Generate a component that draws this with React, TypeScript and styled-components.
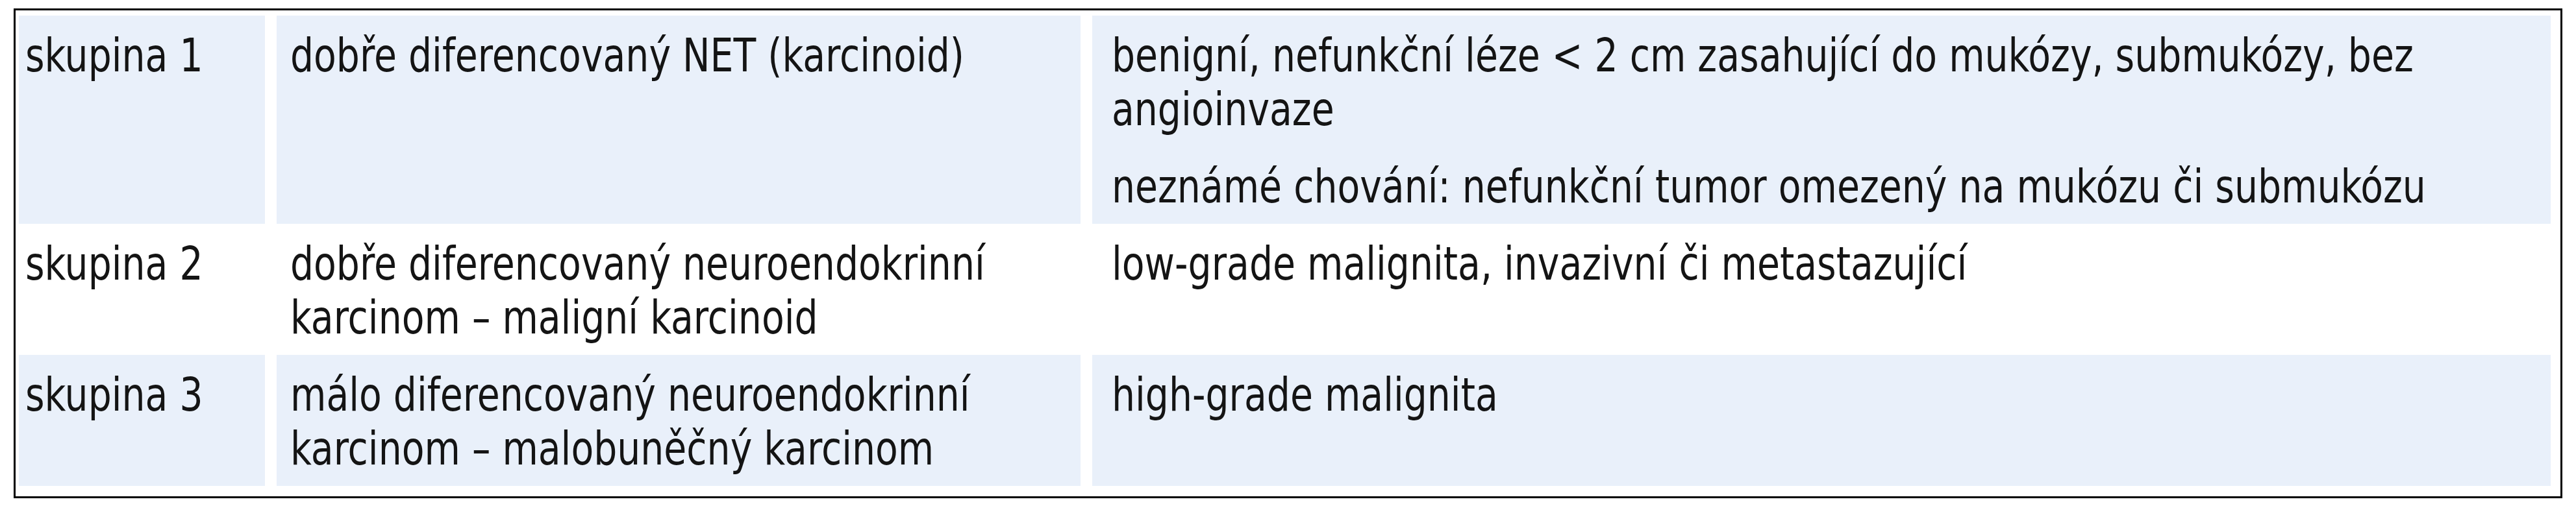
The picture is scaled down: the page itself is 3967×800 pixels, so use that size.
import styled, { createGlobalStyle } from "styled-components";

const GlobalStyle = createGlobalStyle`
  html, body {
    margin: 0;
    padding: 0;
    background: #ffffff;
  }
  body {
    padding: 13px 21px;
    font-family: "DejaVu Sans Condensed", "Liberation Sans", sans-serif;
    color: #141414;
  }
`;

const Table = styled.div`
  border: 3px solid #000000;
  padding: 8px 15px 16px 5px;
  display: flex;
  flex-direction: column;
`;

const Row = styled.div<{ $shaded?: boolean }>`
  display: grid;
  grid-template-columns: 379px 1238px 2246px;
  column-gap: 18px;

  & > div {
    background-color: ${({ $shaded }) => ($shaded ? "#e9f0fa" : "transparent")};
  }
`;

const Cell = styled.div<{ $indent: number }>`
  padding: 20px 0 16px ${({ $indent }) => $indent}px;
  font-size: 71px;
  line-height: 83px;
  white-space: nowrap;
  overflow: hidden;
`;

/* the source face is a narrow one: squeeze the condensed face to its width */
const Text = styled.div`
  transform: scaleX(0.89);
  transform-origin: left top;
`;

const Line = styled.div`
  display: block;
`;

const Para = styled.div`
  & + & {
    margin-top: 36px;
  }
`;

type RowData = {
  group: string;
  type: string[];
  behaviour: string[][];
};

const rows: RowData[] = [
  {
    group: "skupina 1",
    type: ["dobře diferencovaný NET (karcinoid)"],
    behaviour: [
      [
        "benigní, nefunkční léze < 2 cm zasahující do mukózy, submukózy, bez",
        "angioinvaze",
      ],
      ["neznámé chování: nefunkční tumor omezený na mukózu či submukózu"],
    ],
  },
  {
    group: "skupina 2",
    type: ["dobře diferencovaný neuroendokrinní", "karcinom – maligní karcinoid"],
    behaviour: [["low-grade malignita, invazivní či metastazující"]],
  },
  {
    group: "skupina 3",
    type: ["málo diferencovaný neuroendokrinní", "karcinom – malobuněčný karcinom"],
    behaviour: [["high-grade malignita"]],
  },
];

const Lines = ({ lines }: { lines: string[] }) => (
  <>
    {lines.map((line, i) => (
      <Line key={i}>{line}</Line>
    ))}
  </>
);

export default function App() {
  return (
    <>
      <GlobalStyle />
      <Table>
        {rows.map((row, i) => (
          <Row key={row.group} $shaded={i !== 1}>
            <Cell $indent={10}>
              <Text>{row.group}</Text>
            </Cell>
            <Cell $indent={21}>
              <Text>
                <Lines lines={row.type} />
              </Text>
            </Cell>
            <Cell $indent={30}>
              <Text>
                {row.behaviour.map((para, j) => (
                  <Para key={j}>
                    <Lines lines={para} />
                  </Para>
                ))}
              </Text>
            </Cell>
          </Row>
        ))}
      </Table>
    </>
  );
}
